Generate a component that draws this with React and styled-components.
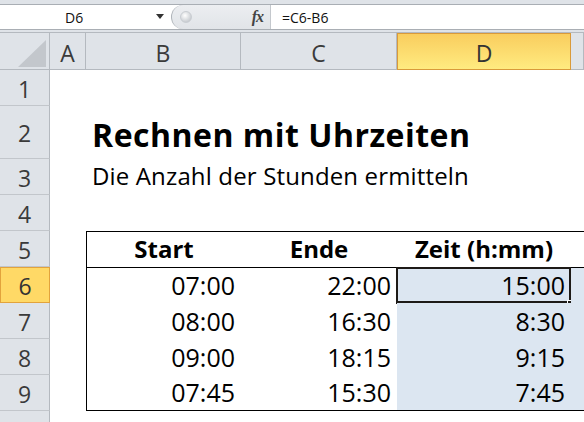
import React from 'react';
import styled, { createGlobalStyle, css } from 'styled-components';

const GlobalStyle = createGlobalStyle`
  html, body {
    margin: 0;
    padding: 0;
    background: #ffffff;
    overflow: hidden;
  }
  body {
    font-family: "Open Sans", "Noto Sans", sans-serif;
  }
`;

const Window = styled.div`
  width: 584px;
  height: 422px;
  overflow: hidden;
  background: #ffffff;
`;

// formula bar
const FormulaBar = styled.div`
  height: 33px;
  box-sizing: border-box;
  background: #dfe3e8;
  padding-top: 4px;
  border-bottom: 1px solid #b4b9bf;
`;

const BarRow = styled.div`
  display: flex;
  height: 26px;
  box-sizing: border-box;
  border-top: 1px solid #a9aeb4;
  border-bottom: 1px solid #a9aeb4;
  background: #ffffff;
`;

const NameBox = styled.div`
  width: 171px;
  display: flex;
  align-items: center;
  font-size: 14px;
  color: #111;
  box-sizing: border-box;
  padding-left: 65px;
  position: relative;
`;

const DropArrow = styled.span`
  position: absolute;
  left: 156px;
  top: 9px;
  width: 0;
  height: 0;
  border-left: 4px solid transparent;
  border-right: 4px solid transparent;
  border-top: 5px solid #333;
`;

const Grip = styled.div`
  width: 100px;
  display: flex;
  align-items: center;
  justify-content: space-between;
  padding: 0 7px 0 8px;
  box-sizing: border-box;
  background: linear-gradient(#eceef1, #e1e4e8);
  border-left: 1px solid #aeb3b9;
  border-right: 1px solid #c4c8cd;
  border-radius: 12px 0 0 12px;
`;

const Knob = styled.span`
  width: 10px;
  height: 10px;
  border-radius: 50%;
  background: radial-gradient(circle at 40% 35%, #ffffff, #c4c8cd 80%);
  border: 1px solid #c9cdd2;
`;

const Fx = styled.span`
  font-family: "Liberation Serif", serif;
  font-style: italic;
  font-weight: bold;
  font-size: 16px;
  color: #444;
  letter-spacing: -1px;
`;

const FormulaInput = styled.div`
  flex: 1;
  display: flex;
  align-items: center;
  padding-left: 11px;
  font-size: 14px;
  color: #111;
`;

// sheet
const Sheet = styled.div`
  display: grid;
  grid-template-columns: 50px 36px 155px 156px 174px 1fr;
  grid-template-rows: 37px 36px 53px repeat(8, 36px);
`;

const headBg = css`
  background: #dfe3e8;
  color: #3a3a3a;
  font-size: 23px;
  display: flex;
  align-items: center;
  justify-content: center;
  box-sizing: border-box;
`;

const Corner = styled.div`
  ${headBg};
  position: relative;
  border-right: 1px solid #b4b9bf;
  border-bottom: 1px solid #b4b9bf;
  &::after {
    content: '';
    position: absolute;
    left: 18px;
    top: 7px;
    width: 28px;
    height: 27px;
    background: #c3c7cc;
    clip-path: polygon(100% 0, 100% 100%, 0 100%);
  }
`;

const ColHead = styled.div`
  ${headBg};
  border-right: 1px solid #b4b9bf;
  border-bottom: 1px solid #b4b9bf;
  padding-top: 3px;
  ${p => p.$active && css`
    background: linear-gradient(#f9cd5e, #ffeb80);
    border: 1px solid #d99a3a;
    color: #333;
  `}
`;

const RowHead = styled.div`
  ${headBg};
  border-right: 1px solid #b4b9bf;
  border-bottom: 1px solid #c2c6cb;
  padding-top: 2px;
  ${p => p.$active && css`
    background: #ffd966;
    border: 1px solid #e2a33c;
    color: #333;
  `}
`;

const Cell = styled.div`
  position: relative;
  display: flex;
  align-items: flex-end;
  box-sizing: border-box;
  line-height: 1;
  color: #000;
  font-size: ${p => (p.$bold ? '24px' : '25px')};
  padding: 0 6px ${p => (p.$bold ? '6px' : '5px')} 6px;
  justify-content: ${p => (p.$align === 'center' ? 'center' : p.$align === 'right' ? 'flex-end' : 'flex-start')};
  font-weight: ${p => (p.$bold ? 700 : 400)};
  background: ${p => (p.$fill ? '#dce6f1' : 'transparent')};
  ${p => p.$top && 'border-top: 1px solid #000;'}
  ${p => p.$bottom && 'border-bottom: 1px solid #000;'}
  ${p => p.$left && 'border-left: 1px solid #000;'}
  ${p => p.$span && `grid-column: span ${p.$span};`}
`;

const Title = styled(Cell)`
  font-size: 32px;
  font-weight: 700;
  letter-spacing: 0.5px;
  padding-bottom: 8px;
  white-space: nowrap;
`;

const Subtitle = styled(Cell)`
  font-size: 24px;
  letter-spacing: 0.15px;
  padding-bottom: 7px;
  white-space: nowrap;
`;

const Selection = styled.div`
  position: absolute;
  left: -1px;
  top: -1px;
  width: 176px;
  height: 37px;
  box-sizing: border-box;
  border: 2px solid #1d1a17;
  border-bottom-width: 3px;
  border-right-width: 3px;
  &::after {
    content: '';
    position: absolute;
    right: -5px;
    bottom: -6px;
    width: 6px;
    height: 6px;
    background: #1d1a17;
    border: 1px solid #fff;
    border-right: none;
    border-bottom: none;
  }
`;

const columns = ['A', 'B', 'C', 'D', ''];

const rows = [
  ['07:00', '22:00', '15:00'],
  ['08:00', '16:30', '8:30'],
  ['09:00', '18:15', '9:15'],
  ['07:45', '15:30', '7:45'],
];

function EmptyRow({ n }) {
  return (
    <>
      <RowHead>{n}</RowHead>
      <Cell />
      <Cell />
      <Cell />
      <Cell />
      <Cell />
    </>
  );
}

export default function App() {
  return (
    <Window>
      <GlobalStyle />
      <FormulaBar>
        <BarRow>
          <NameBox>
            D6
            <DropArrow />
          </NameBox>
          <Grip>
            <Knob />
            <Fx>fx</Fx>
          </Grip>
          <FormulaInput>=C6-B6</FormulaInput>
        </BarRow>
      </FormulaBar>

      <Sheet>
        <Corner />
        {columns.map((c, i) => (
          <ColHead key={i} $active={c === 'D'}>{c}</ColHead>
        ))}

        <EmptyRow n={1} />

        <RowHead>2</RowHead>
        <Cell />
        <Title $span={4}>Rechnen mit Uhrzeiten</Title>

        <RowHead>3</RowHead>
        <Cell />
        <Subtitle $span={4}>Die Anzahl der Stunden ermitteln</Subtitle>

        <EmptyRow n={4} />

        <RowHead>5</RowHead>
        <Cell />
        <Cell $align="center" $bold $top $left>Start</Cell>
        <Cell $align="center" $bold $top>Ende</Cell>
        <Cell $align="center" $bold $top>Zeit (h:mm)</Cell>
        <Cell $top />

        {rows.map((r, i) => {
          const last = i === rows.length - 1;
          return (
            <React.Fragment key={i}>
              <RowHead $active={i === 0}>{6 + i}</RowHead>
              <Cell />
              <Cell $align="right" $left $top={i === 0} $bottom={last}>{r[0]}</Cell>
              <Cell $align="right" $top={i === 0} $bottom={last}>{r[1]}</Cell>
              <Cell $align="right" $fill $top={i === 0} $bottom={last}>
                {r[2]}
                {i === 0 && <Selection />}
              </Cell>
              <Cell $fill $top={i === 0} $bottom={last} />
            </React.Fragment>
          );
        })}

        <EmptyRow n={10} />
      </Sheet>
    </Window>
  );
}
